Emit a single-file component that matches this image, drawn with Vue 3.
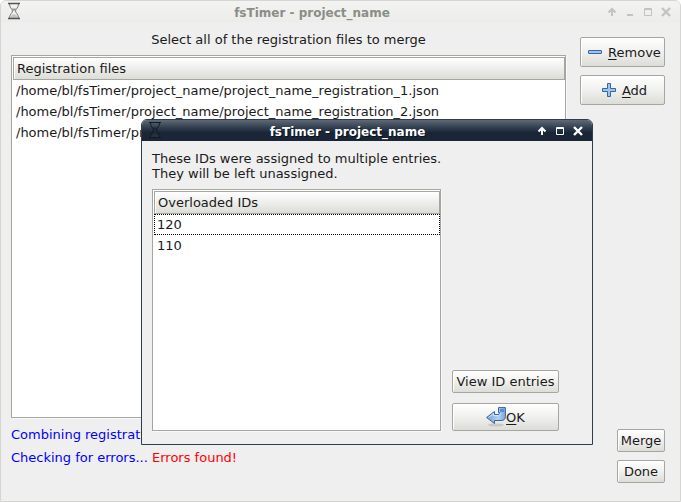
<script setup>
import { ref } from 'vue'

const files = ref([
  '/home/bl/fsTimer/project_name/project_name_registration_1.json',
  '/home/bl/fsTimer/project_name/project_name_registration_2.json',
  '/home/bl/fsTimer/project_name/project_name_registration_3.json',
])
const overloaded = ref(['120', '110'])
const selected = ref(0)
</script>

<template>
  <main class="window">
    <header class="titlebar">
      <svg class="glass" viewBox="0 0 14 18" aria-hidden="true">
        <path d="M2.5 2C2.5 6 5.5 7 5.5 9S2.5 12 2.5 16M11.5 2C11.5 6 8.5 7 8.5 9S11.5 12 11.5 16" fill="#f4f4f4" stroke="#777" />
        <path d="M4 6.5H10L7 9Z" fill="#999" />
        <path d="M3 16C3 13 5 13.5 7 12C9 13.5 11 13 11 16Z" fill="#c4c4c4" />
        <path d="M1 1.5H13M1 16.5H13" stroke="#555" stroke-width="1.4" />
      </svg>
      <h1 class="title">fsTimer - project_name</h1>
      <div class="controls">
        <button type="button" aria-label="Shade">
          <svg viewBox="0 0 10 10"><path d="M5 9V2M1.5 5.5L5 2L8.5 5.5" /></svg>
        </button>
        <button type="button" aria-label="Minimize">
          <svg viewBox="0 0 10 10"><path d="M2 8H8" /></svg>
        </button>
        <button type="button" aria-label="Maximize">
          <svg viewBox="0 0 10 10"><path class="thin" d="M1.5 1.5H8.5V8.5H1.5Z M1 2.5H9" /></svg>
        </button>
        <button type="button" aria-label="Close">
          <svg viewBox="0 0 10 10"><path class="thick" d="M1 1L9 9M9 1L1 9" /></svg>
        </button>
      </div>
    </header>

    <div class="content">
      <section class="files">
        <p class="prompt">Select all of the registration files to merge</p>
        <div class="list">
          <table>
            <thead><tr><th>Registration files</th></tr></thead>
            <tbody>
              <tr v-for="file in files" :key="file"><td>{{ file }}</td></tr>
            </tbody>
          </table>
        </div>
        <div class="status">
          <p>Combining registrations...</p>
          <p>Checking for errors... <span class="error">Errors found!</span></p>
        </div>
      </section>

      <aside class="actions">
        <div class="group">
          <button type="button" class="btn tall">
            <svg class="icon" viewBox="0 0 16 16" aria-hidden="true">
              <rect x="1.5" y="6.5" width="13" height="3" rx="0.5" fill="#a3c3e6" stroke="#3465a4" />
            </svg>
            <span><u>R</u>emove</span>
          </button>
          <button type="button" class="btn tall">
            <svg class="icon" viewBox="0 0 16 16" aria-hidden="true">
              <path d="M6.5 1.5H9.5V6.5H14.5V9.5H9.5V14.5H6.5V9.5H1.5V6.5H6.5Z" fill="#a3c3e6" stroke="#3465a4" stroke-linejoin="round" />
            </svg>
            <span><u>A</u>dd</span>
          </button>
        </div>
        <div class="group end">
          <button type="button" class="btn">Merge</button>
          <button type="button" class="btn">Done</button>
        </div>
      </aside>
    </div>

    <section class="dialog" role="dialog" aria-labelledby="dialog-title">
      <header class="titlebar active">
        <svg class="glass" viewBox="0 0 14 18" aria-hidden="true">
          <path d="M2.5 2C2.5 6 5.5 7 5.5 9S2.5 12 2.5 16M11.5 2C11.5 6 8.5 7 8.5 9S11.5 12 11.5 16" fill="none" stroke="#111922" />
          <path d="M4 6.5H10L7 9Z" fill="#1b2430" />
          <path d="M3 16C3 13 5 13.5 7 12C9 13.5 11 13 11 16Z" fill="#27313f" />
          <path d="M1 1.5H13M1 16.5H13" stroke="#111922" stroke-width="1.2" />
        </svg>
        <h2 id="dialog-title" class="title">fsTimer - project_name</h2>
        <div class="controls">
          <button type="button" aria-label="Shade">
            <svg viewBox="0 0 10 10"><path d="M5 9V2M1.5 5.5L5 2L8.5 5.5" /></svg>
          </button>
          <button type="button" aria-label="Maximize">
            <svg viewBox="0 0 10 10"><path class="thin" d="M1.5 1.5H8.5V8.5H1.5Z M1 2.5H9" /></svg>
          </button>
          <button type="button" aria-label="Close">
            <svg viewBox="0 0 10 10"><path class="thick" d="M1 1L9 9M9 1L1 9" /></svg>
          </button>
        </div>
      </header>
      <div class="dialog-body">
        <p class="message">These IDs were assigned to multiple entries.<br />They will be left unassigned.</p>
        <div class="dialog-row">
          <div class="list">
            <table>
              <thead><tr><th>Overloaded IDs</th></tr></thead>
              <tbody>
                <tr v-for="(id, i) in overloaded" :key="id" :class="{ focused: i === selected }" @click="selected = i">
                  <td>{{ id }}</td>
                </tr>
              </tbody>
            </table>
          </div>
          <div class="dialog-actions">
            <button type="button" class="btn">View ID entries</button>
            <button type="button" class="btn ok">
              <svg class="enter" viewBox="0 0 20 20" aria-hidden="true">
                <defs>
                  <linearGradient id="enter-fill" x1="0" y1="0" x2="1" y2="0">
                    <stop offset="0" stop-color="#6f9fd4" />
                    <stop offset="0.6" stop-color="#b7d1ee" />
                    <stop offset="1" stop-color="#7fa9da" />
                  </linearGradient>
                </defs>
                <ellipse cx="10" cy="18" rx="8" ry="1.6" fill="#c9c9c5" />
                <path d="M0.6 10.5L8.5 4.5V7.5H12Q13.5 7.5 13.5 6V5.5H12.5V0.6H19.4V9.5Q19.4 13.5 15 13.5H8.5V16.500Z" fill="url(#enter-fill)" stroke="#3465a4" stroke-linejoin="round" />
                <path d="M14 2H18V5H14Z" fill="#5b8fcb" />
                <path d="M2.5 10.5L7.5 6.5V8.5H12.5Q14.5 8.5 14.5 6" fill="none" stroke="#d3e3f5" />
              </svg>
              <span><u>O</u>K</span>
            </button>
          </div>
        </div>
      </div>
    </section>
  </main>
</template>

<style>
body {
  margin: 0;
  background: #fff;
}
</style>

<style scoped>
* {
  box-sizing: border-box;
}

.window {
  position: relative;
  display: flex;
  flex-direction: column;
  min-height: 100vh;
  overflow: hidden;
  border: 1px solid #d5d5d4;
  border-radius: 6px 6px 0 0;
  background: #efefef;
  color: #1a1a1a;
  font-family: "DejaVu Sans", Verdana, sans-serif;
  font-size: 13px;
  line-height: 15px;
}

p,
h1,
h2 {
  margin: 0;
}

.titlebar {
  display: flex;
  align-items: flex-start;
  height: 21px;
  padding: 0 9px 0 6px;
  background: linear-gradient(#f3f3f2, #ececea);
  color: #8b8d87;
}

.titlebar.active {
  background: linear-gradient(#606a76, #2c3a4b 40%, #1a2636 60%, #1a2636);
  color: #fff;
}

.glass {
  width: 14px;
  height: 19px;
  padding-top: 1px;
}

.title {
  flex: 1;
  padding-top: 5px;
  font-size: 12px;
  line-height: 15px;
  font-weight: bold;
  text-align: center;
}

.active .title {
  text-shadow: 1px 1px 0 #0b121c;
}

.controls {
  display: flex;
  gap: 8px;
  padding: 6px 0 0 4px;
}

.controls button {
  width: 10px;
  height: 10px;
  padding: 0;
  border: 0;
  background: none;
  color: #c3c3c1;
}

.active .controls button {
  color: #fff;
}

.controls svg {
  display: block;
  width: 10px;
  height: 10px;
  fill: none;
  stroke: currentColor;
  stroke-width: 2;
}

.controls .thin {
  stroke-width: 1;
}

.controls .thick {
  stroke-width: 2.4;
}

.content {
  flex: 1;
  display: flex;
  gap: 14px;
  padding: 10px 15px 18px 10px;
}

.files {
  flex: 1;
  min-width: 0;
  display: flex;
  flex-direction: column;
}

.prompt {
  padding-bottom: 8px;
  text-align: center;
}

.list {
  flex: 1;
  min-width: 0;
  padding: 1px 0 1px 1px;
  border: 1px solid #a5a69e;
  background: #fff;
  box-shadow: 1px 1px 0 #f9f9f9;
}

table {
  width: 100%;
  border-spacing: 0;
}

th {
  height: 23px;
  padding: 0 3px;
  border: 1px solid #a5a69e;
  background: linear-gradient(#fff, #dcdcd8);
  box-shadow: inset 1px 1px 0 #fff;
  font-weight: normal;
  text-align: left;
}

td {
  height: 21px;
  padding: 0 2px;
  border: 1px solid transparent;
}

.focused td {
  border: 1px dotted #000;
}

.status {
  display: flex;
  flex-direction: column;
  gap: 8px;
  padding: 9px 0 18px;
  color: #00f;
  white-space: nowrap;
}

.error {
  color: #f00;
}

.actions {
  display: flex;
  flex-direction: column;
  justify-content: space-between;
  min-width: 85px;
  padding-top: 5px;
}

.group {
  display: flex;
  flex-direction: column;
  gap: 8px;
}

.end {
  align-self: flex-end;
  min-width: 48px;
}

.btn {
  display: flex;
  align-items: center;
  justify-content: center;
  height: 23px;
  padding: 0 2px;
  border: 1px solid #a5a69e;
  border-radius: 2px;
  background: linear-gradient(#fff, #f0f0ee 50%, #dcdcd8);
  box-shadow: inset 1px 1px 0 #fff;
  color: #1a1a1a;
  font: inherit;
  white-space: nowrap;
}

.tall {
  gap: 5px;
  height: 30px;
  padding: 0 0 0 3px;
}

.btn u {
  text-underline-offset: 2px;
}

.icon {
  width: 16px;
  height: 16px;
}

.dialog {
  position: absolute;
  top: 118px;
  left: 140px;
  width: 452px;
  overflow: hidden;
  border: 1px solid #2f3c4d;
  border-radius: 6px 6px 0 0;
  background: #efefef;
}

.dialog-body {
  padding: 10px 33px 13px 10px;
}

.message {
  padding-bottom: 8px;
}

.dialog-row {
  display: flex;
  gap: 11px;
  height: 242px;
}

.dialog-actions {
  display: flex;
  flex-direction: column;
  justify-content: flex-end;
  gap: 10px;
  min-width: 107px;
}

.ok {
  height: 28px;
}

.enter {
  width: 20px;
  height: 20px;
}
</style>
